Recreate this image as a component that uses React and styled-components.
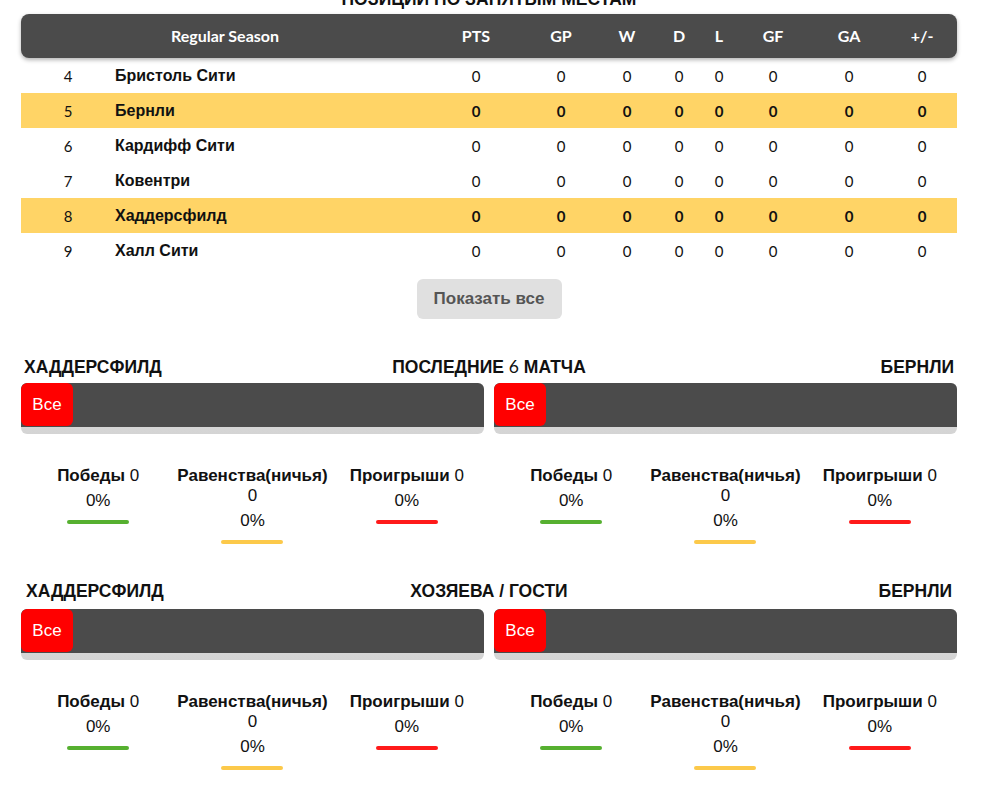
import styled, { createGlobalStyle } from "styled-components";

const GlobalStyle = createGlobalStyle`
  html, body {
    margin: 0;
    padding: 0;
    overflow: hidden;
    background: #fff;
  }
  body {
    font-family: "Liberation Sans", Arial, sans-serif;
    color: #111;
  }
`;

const Page = styled.div`
  width: 936px;
  margin-left: 21px;
`;

const Title = styled.h2`
  margin: -11px 0 5px;
  font-size: 17.5px;
  line-height: 20px;
  font-weight: 700;
  text-align: center;
  text-transform: uppercase;
`;

const cols = "94px 314px 94px 76px 56px 48px 32px 76px 76px 70px";

const TableHead = styled.div`
  display: grid;
  grid-template-columns: ${cols};
  height: 44px;
  padding-bottom: 1px;
  box-sizing: border-box;
  align-items: center;
  background: #4b4b4b;
  border-radius: 8px;
  box-shadow: 0 2px 4px rgba(0, 0, 0, 0.3);
  color: #fff;
  font-family: Lato, sans-serif;
  font-size: 16px;
  font-weight: 700;
  position: relative;
  z-index: 1;
`;

const HeadCell = styled.div`
  text-align: center;
  grid-column: ${(p) => (p.$wide ? "span 2" : "auto")};
`;

const Row = styled.div`
  display: grid;
  grid-template-columns: ${cols};
  height: 35px;
  align-items: center;
  background: ${(p) => (p.$hl ? "#ffd466" : "#fff")};
  font-family: Lato, sans-serif;
  font-size: 15px;
  color: #111;
`;

const Cell = styled.div`
  text-align: center;
  font-weight: ${(p) => (p.$bold ? 700 : 400)};
`;

const Name = styled.div`
  text-align: left;
  font-family: "Liberation Sans", Arial, sans-serif;
  font-size: 16px;
  font-weight: 700;
`;

const ShowAll = styled.button`
  display: block;
  margin: 11px auto 0;
  width: 145px;
  height: 40px;
  border: none;
  border-radius: 6px;
  background: #e0e0e0;
  color: #555;
  font-family: "Liberation Sans", Arial, sans-serif;
  font-size: 17px;
  font-weight: 700;
`;

const Section = styled.section`
  margin-top: ${(p) => p.$top}px;
`;

const Headings = styled.div`
  display: grid;
  grid-template-columns: 1fr auto 1fr;
  padding: 0 ${(p) => p.$inset}px;
  font-size: 17.5px;
  line-height: 20px;
  font-weight: 700;
  text-transform: uppercase;
`;

const Heading = styled.div`
  text-align: ${(p) => p.$align};
`;

const Thin = styled.span`
  font-family: Lato, sans-serif;
  font-weight: 400;
`;

const Halves = styled.div`
  display: grid;
  grid-template-columns: 1fr 1fr;
  gap: 10px;
  margin-top: ${(p) => p.$gap}px;
`;

const TabBar = styled.div`
  height: 51px;
  border-radius: 6px;
  overflow: hidden;
  background: linear-gradient(#e2e2e2, #d4d4d4);
`;

const TabTrack = styled.div`
  display: flex;
  height: 44px;
  background: #4b4b4b;
`;

const Tab = styled.div`
  width: 52px;
  height: 43px;
  border-radius: 6px;
  background: #ff0000;
  color: #fff;
  font-size: 17px;
  line-height: 43px;
  text-align: center;
`;

const Stats = styled.div`
  display: grid;
  grid-template-columns: repeat(3, 1fr);
  margin-top: 32px;
  text-align: center;
`;

const Stat = styled.div`
  display: flex;
  flex-direction: column;
  align-items: center;
`;

const Label = styled.div`
  font-size: 17px;
  line-height: 20px;
  font-weight: 700;
  color: #111;
`;

const Count = styled.span`
  font-weight: 400;
`;

const Percent = styled.div`
  margin-top: 5px;
  font-size: 17px;
  line-height: 20px;
`;

const Line = styled.div`
  width: 62px;
  height: 4px;
  margin-top: 9px;
  border-radius: 2px;
  background: ${(p) => p.$color};
`;

const rows = [
  { pos: 4, name: "Бристоль Сити" },
  { pos: 5, name: "Бернли", hl: true },
  { pos: 6, name: "Кардифф Сити" },
  { pos: 7, name: "Ковентри" },
  { pos: 8, name: "Хаддерсфилд", hl: true },
  { pos: 9, name: "Халл Сити" },
];

const heads = ["PTS", "GP", "W", "D", "L", "GF", "GA", "+/-"];

const stats = [
  { label: "Победы", color: "#56b030" },
  { label: "Равенства(ничья)", color: "#fcc94a" },
  { label: "Проигрыши", color: "#ff1a1a" },
];

const Half = () => (
  <div>
    <TabBar>
      <TabTrack>
        <Tab>Все</Tab>
      </TabTrack>
    </TabBar>
    <Stats>
      {stats.map((s) => (
        <Stat key={s.label}>
          <Label>
            {s.label} <Count>0</Count>
          </Label>
          <Percent>0%</Percent>
          <Line $color={s.color} />
        </Stat>
      ))}
    </Stats>
  </div>
);

const Compare = ({ top, inset, gap, middle }) => (
  <Section $top={top}>
    <Headings $inset={inset}>
      <Heading $align="left">Хаддерсфилд</Heading>
      <Heading $align="center">{middle}</Heading>
      <Heading $align="right">Бернли</Heading>
    </Headings>
    <Halves $gap={gap}>
      <Half />
      <Half />
    </Halves>
  </Section>
);

export default function App() {
  return (
    <>
      <GlobalStyle />
      <Page>
        <Title>Позиции по занятым местам</Title>
        <TableHead>
          <HeadCell $wide>Regular Season</HeadCell>
          {heads.map((h) => (
            <HeadCell key={h}>{h}</HeadCell>
          ))}
        </TableHead>
        {rows.map((r) => (
          <Row key={r.pos} $hl={r.hl}>
            <Cell>{r.pos}</Cell>
            <Name>{r.name}</Name>
            {heads.map((h) => (
              <Cell key={h} $bold={r.hl}>0</Cell>
            ))}
          </Row>
        ))}
        <ShowAll>Показать все</ShowAll>
        <Compare
          top={38}
          inset={3}
          gap={6}
          middle={<>Последние <Thin>6</Thin> матча</>}
        />
        <Compare top={37} inset={5} gap={8} middle="Хозяева / Гости" />
      </Page>
    </>
  );
}
